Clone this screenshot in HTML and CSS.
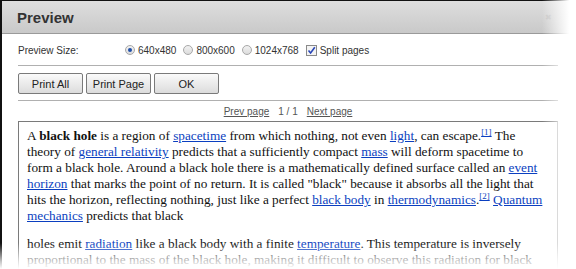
FILE: index.html
```html
<!DOCTYPE html>
<html>
<head>
	<meta charset="utf-8">
	<title>Preview</title>
	<link rel="stylesheet" href="styles.css">
</head>
<body>

	<div class="dialog">
		<div class="titlebar">
			<span class="title">Preview</span>
			<span class="close">&#x2716;</span>
		</div>

		<div class="content">
			<div class="row options">
				<span class="label">Preview Size:</span>
				<label class="opt"><span class="radio on"></span>640x480</label>
				<label class="opt"><span class="radio"></span>800x600</label>
				<label class="opt"><span class="radio"></span>1024x768</label>
				<label class="opt"><span class="check">
					<svg width="9" height="9" viewBox="0 0 9 9"><path d="M1.5 4.5 L3.6 7 L7.8 1.2" fill="none" stroke="#2a47b8" stroke-width="1.6"/></svg>
				</span>Split pages</label>
			</div>

			<div class="row buttons">
				<button class="btn">Print All</button>
				<button class="btn">Print Page</button>
				<button class="btn">OK</button>
			</div>

			<div class="pager">
				<a href="#">Prev page</a>
				<span>1 / 1</span>
				<a href="#">Next page</a>
			</div>

			<div class="page">
				<p>A <b>black hole</b> is a region of <a href="#">spacetime</a> from which nothing, not even <a href="#">light</a>, can escape.<sup><a href="#">[1]</a></sup> The theory of <a href="#">general relativity</a> predicts that a sufficiently compact <a href="#">mass</a> will deform spacetime to form a black hole. Around a black hole there is a mathematically defined surface called an <a href="#">event horizon</a> that marks the point of no return. It is called "black" because it absorbs all the light that hits the horizon, reflecting nothing, just like a perfect <a href="#">black body</a> in <a href="#">thermodynamics</a>.<sup><a href="#">[2]</a></sup> <a href="#">Quantum mechanics</a> predicts that black</p>
				<p>holes emit <a href="#">radiation</a> like a black body with a finite <a href="#">temperature</a>. This temperature is inversely proportional to the mass of the black hole, making it difficult to observe this radiation for black holes of stellar mass or greater.</p>
			</div>
		</div>
	</div>

	<div class="fade-right"></div>
	<div class="fade-bottom"></div>

</body>
</html>
```

FILE: styles.css
```css
html, body {
	margin: 0;
	height: 269px;
	overflow: hidden;
	background: #fff;
}

body {
	position: relative;
	font-family: "Liberation Sans", Arial, sans-serif;
	color: #333;
}

.dialog {
	width: 571px;
	height: 268px;
	border-top: 1px solid #111;
	border-left: 2px solid #111;
	background: #fff;
	overflow: hidden;
}

.titlebar {
	height: 32px;
	display: flex;
	align-items: center;
	justify-content: space-between;
	padding: 0 21px 0 15px;
	background: linear-gradient(#dedede, #c9c9c9);
	border-bottom: 1px solid #9a9a9a;
}

.title {
	font-size: 15px;
	font-weight: bold;
	color: #333;
}

.close {
	font-size: 8px;
	color: #c4c4c4;
}

.content {
	padding: 0 15px 0 16px;
}

.row {
	display: flex;
	align-items: center;
	border-bottom: 1px solid #b0b0b0;
}

.options {
	height: 30px;
	font-size: 10px;
	padding-top: 1px;
}

.label {
	width: 107px;
}

.opt {
	display: flex;
	align-items: center;
	margin-right: 7px;
}

.radio {
	width: 8px;
	height: 8px;
	border-radius: 50%;
	border: 1px solid #a8a8a8;
	background: linear-gradient(#f2f2f2, #dcdcdc);
	margin-right: 3px;
	position: relative;
}

.radio.on::after {
	content: "";
	position: absolute;
	left: 2px;
	top: 2px;
	width: 4px;
	height: 4px;
	border-radius: 50%;
	background: #1f4fa8;
}

.check {
	width: 9px;
	height: 9px;
	border: 1px solid #8a8a8a;
	background: #f4f4f4;
	margin-right: 3px;
	display: flex;
}

.buttons {
	height: 33px;
	padding-top: 1px;
	gap: 3px;
}

.btn {
	width: 65px;
	height: 21px;
	margin: 0;
	padding: 0;
	font-family: "Liberation Sans", Arial, sans-serif;
	font-size: 11px;
	color: #222;
	border: 1px solid #7a7a7a;
	border-radius: 2px;
	background: linear-gradient(#fafafa, #dcdcdc);
}

.pager {
	height: 20px;
	display: flex;
	justify-content: center;
	align-items: center;
	gap: 9px;
	font-size: 10px;
	color: #555;
}

.pager a {
	color: #555;
}

.page {
	border: 1px solid #7a7a7a;
	border-right-color: #aaa;
	padding: 6px 8px 0 8px;
	font-family: "Liberation Serif", "Times New Roman", serif;
	font-size: 13.25px;
	line-height: 16px;
	color: #111;
	height: 200px;
}

.page p {
	margin: 0 0 12px;
}

.page a {
	color: #0b3fc0;
}

.page sup {
	font-size: 9px;
	line-height: 0;
}

.fade-right {
	position: absolute;
	top: 0;
	right: 0;
	width: 34px;
	height: 269px;
	background: linear-gradient(to right, rgba(255,255,255,0), #fff 80%);
}

.fade-bottom {
	position: absolute;
	left: 0;
	bottom: 0;
	width: 576px;
	height: 26px;
	background: linear-gradient(rgba(255,255,255,0), rgba(255,255,255,0.75) 70%, #fff);
}
```
